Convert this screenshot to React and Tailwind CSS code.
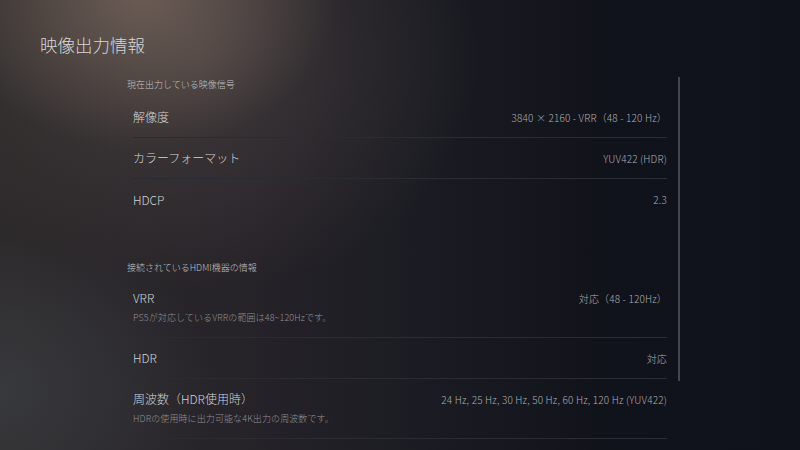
const font = { fontFamily: '"Noto Sans CJK JP", "Noto Sans", sans-serif' };

const current = [
  { label: '解像度', value: '3840 × 2160 - VRR（48 - 120 Hz）', border: true },
  { label: 'カラーフォーマット', value: 'YUV422 (HDR)', border: true },
  { label: 'HDCP', value: '2.3', border: false },
];

const hdmi = [
  { label: 'VRR', value: '対応（48 - 120Hz）', sub: 'PS5が対応しているVRRの範囲は48~120Hzです。' },
  { label: 'HDR', value: '対応' },
  {
    label: '周波数（HDR使用時）',
    value: '24 Hz, 25 Hz, 30 Hz, 50 Hz, 60 Hz, 120 Hz (YUV422)',
    sub: 'HDRの使用時に出力可能な4K出力の周波数です。',
  },
];

function Row({ label, value, sub, border = true }) {
  return (
    <div className={`ml-[6px] ${border ? 'border-b border-[#2a2c34]' : ''} ${sub ? 'pt-[11px] pb-[12px]' : 'h-[41px] flex flex-col justify-center'}`}>
      <div className="flex items-center justify-between h-[18px]">
        <span className="text-[12px] text-[#d2d2d4]">{label}</span>
        <span className="text-[10px] tracking-[0.15px] text-[#acadb0]">{value}</span>
      </div>
      {sub && <div className="mt-[4px] h-[14px] leading-[14px] text-[9px] tracking-[0.1px] text-[#8f9095]">{sub}</div>}
    </div>
  );
}

export default function App() {
  return (
    <div
      style={font}
      className="relative w-[800px] h-[450px] overflow-hidden font-light bg-[#11131b]
                 bg-[radial-gradient(ellipse_200px_160px_at_140px_-10px,rgba(150,128,112,0.55),transparent),radial-gradient(ellipse_280px_230px_at_200px_60px,rgba(110,95,88,0.35),transparent),radial-gradient(ellipse_220px_160px_at_0px_390px,rgba(70,76,82,0.45),transparent),linear-gradient(to_right,#2d2a2b_0%,#262329_30%,#1a1b22_55%,#11131b_75%,#0f121b_100%)]"
    >
      {/* ── Title ── */}
      <div className="pt-[32px] pl-[40px] h-[58px] text-[17.5px] leading-[26px] text-[#d6d6d8]">
        映像出力情報
      </div>

      <div className="flex">
        {/* ── Lists ── */}
        <div className="ml-[127px] w-[540px] pt-[20px]">
          <div className="h-[14px] leading-[14px] text-[9px] text-[#c0c0c2]">現在出力している映像信号</div>
          <div className="mt-[5px]">
            {current.map((r) => <Row key={r.label} {...r} />)}
          </div>

          <div className="mt-[41px] h-[14px] leading-[14px] text-[9px] text-[#c0c0c2]">接続されているHDMI機器の情報</div>
          <div className="mt-[3px]">
            {hdmi.map((r) => <Row key={r.label} {...r} />)}
          </div>
        </div>

        {/* ── Scrollbar ── */}
        <div className="ml-[11px] mt-[19px] w-[2px] h-[304px] bg-[#44464f]" />
      </div>
    </div>
  );
}
